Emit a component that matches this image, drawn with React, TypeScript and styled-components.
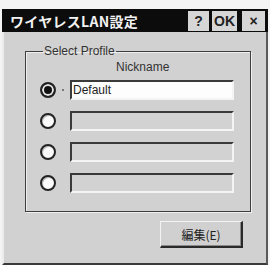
import React from "react";
import styled, { createGlobalStyle } from "styled-components";

const Global = createGlobalStyle`
  html, body { margin: 0; padding: 0; background: #f4f4f4; }
  body { font-family: "Liberation Sans", "Noto Sans CJK JP", sans-serif; }
`;

const Page = styled.div`
  width: 270px;
  height: 265px;
  padding: 9px 2px 0 2px;
  box-sizing: border-box;
`;

const Window = styled.div`
  width: 266px;
  height: 256px;
  box-sizing: border-box;
  background: #d1d1d1;
  border-left: 2px solid #ececec;
  border-right: 2px solid #5a5a5a;
  border-bottom: 2px solid #3a3a3a;
  display: flex;
  flex-direction: column;
`;

const TitleBar = styled.div`
  height: 23px;
  background: #0c0c0c;
  display: flex;
  align-items: center;
  padding: 0 3px 0 8px;
  margin: 0 -2px;
`;

const Title = styled.div`
  flex: 1;
  color: #f2f2f2;
  font: bold 14px "Noto Sans CJK JP", sans-serif;
  letter-spacing: 0.3px;
  white-space: nowrap;
`;

const TitleButton = styled.div<{ $w: number; $gap: number }>`
  width: ${(p) => p.$w}px;
  margin-left: ${(p) => p.$gap}px;
  height: 20px;
  box-sizing: border-box;
  background: #d6d6d6;
  color: #222;
  display: flex;
  align-items: center;
  justify-content: center;
  font: bold 14px "Liberation Sans", sans-serif;
`;

const Body = styled.div`
  flex: 1;
  display: flex;
  flex-direction: column;
  padding: 12px 16px 0 21px;
`;

const Group = styled.fieldset`
  margin: 0;
  padding: 1px 16px 18px 14px;
  border: 1px solid #3e3e3e;
  box-shadow: 1px 1px 0 #efefef, inset 1px 1px 0 #efefef;
  width: 226px;
  box-sizing: border-box;
`;

const Legend = styled.legend`
  padding: 0 1px;
  margin-left: 3px;
  font-size: 12px;
  line-height: 14px;
  color: #333;
`;

const Header = styled.div`
  padding-left: 76px;
  font-size: 12px;
  line-height: 14px;
  color: #333;
  margin-top: 1px;
  margin-bottom: 6px;
`;

const Rows = styled.div`
  display: flex;
  flex-direction: column;
  gap: 11px;
`;

const Row = styled.div`
  display: flex;
  align-items: center;
  height: 20px;
`;

const Radio = styled.div<{ $checked?: boolean }>`
  width: 16px;
  height: 16px;
  box-sizing: border-box;
  border-radius: 50%;
  border: 2px solid #222;
  background: ${(p) => (p.$checked ? "#111" : "#fafafa")};
  box-shadow: ${(p) =>
    p.$checked ? "inset 0 0 0 2px #e8e8e8" : "inset 1px 1px 0 #bbb"};
  flex: none;
`;

const Focus = styled.div<{ $show?: boolean }>`
  width: 14px;
  display: flex;
  justify-content: center;
  &::after {
    content: "";
    width: 2px;
    height: 2px;
    background: ${(p) => (p.$show ? "#777" : "transparent")};
  }
`;

const Field = styled.div<{ $enabled?: boolean }>`
  width: 164px;
  height: 20px;
  box-sizing: border-box;
  border-top: 2px solid #3a3a3a;
  border-left: 2px solid #3a3a3a;
  border-bottom: 2px solid #f4f4f4;
  border-right: 2px solid #f4f4f4;
  background: ${(p) => (p.$enabled ? "#fdfdfd" : "#d2d2d2")};
  font-size: 12px;
  line-height: 16px;
  color: #222;
  padding-left: 1px;
`;

const Footer = styled.div`
  display: flex;
  justify-content: flex-end;
  padding-top: 9px;
`;

const Button = styled.div`
  width: 83px;
  height: 27px;
  box-sizing: border-box;
  background: #d0d0d0;
  border-top: 1px solid #f2f2f2;
  border-left: 1px solid #f2f2f2;
  border-right: 2px solid #2a2a2a;
  border-bottom: 2px solid #2a2a2a;
  box-shadow: inset -1px -1px 0 #8a8a8a;
  display: flex;
  align-items: center;
  justify-content: center;
  font: 12px "Noto Sans CJK JP", sans-serif;
  color: #222;
  margin-right: 7px;
`;

const profiles = ["Default", "", "", ""];

export default function App() {
  return (
    <Page>
      <Global />
      <Window>
        <TitleBar>
          <Title>ワイヤレスLAN設定</Title>
          <TitleButton $w={21} $gap={0}>?</TitleButton>
          <TitleButton $w={25} $gap={3}>OK</TitleButton>
          <TitleButton $w={23} $gap={5}>×</TitleButton>
        </TitleBar>
        <Body>
          <Group>
            <Legend>Select Profile</Legend>
            <Header>Nickname</Header>
            <Rows>
              {profiles.map((name, i) => (
                <Row key={i}>
                  <Radio $checked={i === 0} />
                  <Focus $show={i === 0} />
                  <Field $enabled={i === 0}>{name}</Field>
                </Row>
              ))}
            </Rows>
          </Group>
          <Footer>
            <Button>編集(E)</Button>
          </Footer>
        </Body>
      </Window>
    </Page>
  );
}
